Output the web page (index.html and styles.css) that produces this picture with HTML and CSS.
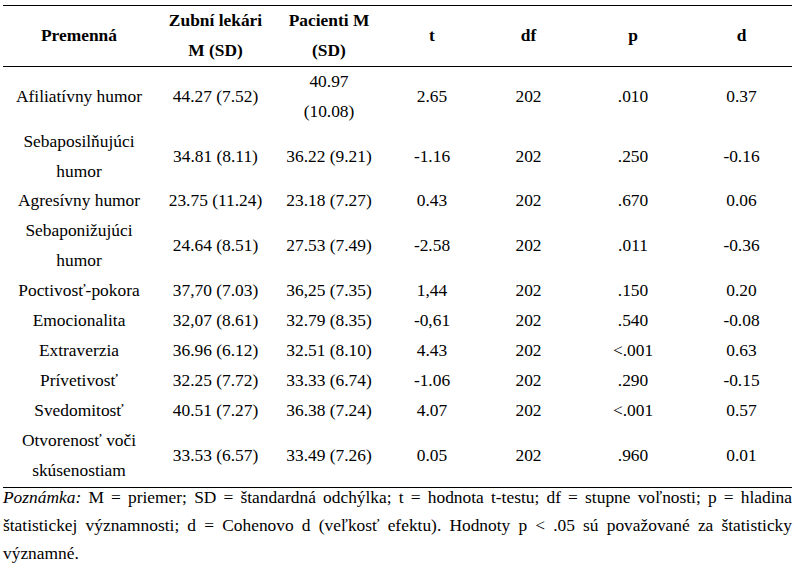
FILE: index.html
```
<!DOCTYPE html>
<html lang="sk">
<head>
<meta charset="utf-8">
<title>Tabuľka</title>
<link rel="stylesheet" href="styles.css">
</head>
<body>
<div class="page">
  <table class="stats">
    <colgroup>
      <col class="c1"><col class="c2"><col class="c3"><col class="c4"><col class="c5"><col class="c6"><col class="c7">
    </colgroup>
    <thead>
      <tr>
        <th>Premenná</th>
        <th>Zubní lekári M (SD)</th>
        <th>Pacienti M (SD)</th>
        <th>t</th>
        <th>df</th>
        <th>p</th>
        <th>d</th>
      </tr>
    </thead>
    <tbody>
      <tr><td>Afiliatívny humor</td><td>44.27 (7.52)</td><td>40.97 (10.08)</td><td>2.65</td><td>202</td><td>.010</td><td>0.37</td></tr>
      <tr><td>Sebaposilňujúci humor</td><td>34.81 (8.11)</td><td>36.22 (9.21)</td><td>-1.16</td><td>202</td><td>.250</td><td>-0.16</td></tr>
      <tr><td>Agresívny humor</td><td>23.75 (11.24)</td><td>23.18 (7.27)</td><td>0.43</td><td>202</td><td>.670</td><td>0.06</td></tr>
      <tr><td>Sebaponižujúci humor</td><td>24.64 (8.51)</td><td>27.53 (7.49)</td><td>-2.58</td><td>202</td><td>.011</td><td>-0.36</td></tr>
      <tr><td>Poctivosť-pokora</td><td>37,70 (7.03)</td><td>36,25 (7.35)</td><td>1,44</td><td>202</td><td>.150</td><td>0.20</td></tr>
      <tr><td>Emocionalita</td><td>32,07 (8.61)</td><td>32.79 (8.35)</td><td>-0,61</td><td>202</td><td>.540</td><td>-0.08</td></tr>
      <tr><td>Extraverzia</td><td>36.96 (6.12)</td><td>32.51 (8.10)</td><td>4.43</td><td>202</td><td>&lt;.001</td><td>0.63</td></tr>
      <tr><td>Prívetivosť</td><td>32.25 (7.72)</td><td>33.33 (6.74)</td><td>-1.06</td><td>202</td><td>.290</td><td>-0.15</td></tr>
      <tr><td>Svedomitosť</td><td>40.51 (7.27)</td><td>36.38 (7.24)</td><td>4.07</td><td>202</td><td>&lt;.001</td><td>0.57</td></tr>
      <tr class="last"><td>Otvorenosť voči skúsenostiam</td><td>33.53 (6.57)</td><td>33.49 (7.26)</td><td>0.05</td><td>202</td><td>.960</td><td>0.01</td></tr>
    </tbody>
  </table>
  <div class="note">
    <p class="note-line justify"><em>Poznámka:</em> M = priemer; SD = štandardná odchýlka; t = hodnota t-testu; df = stupne voľnosti; p = hladina</p>
    <p class="note-line justify">štatistickej významnosti; d = Cohenovo d (veľkosť efektu). Hodnoty p &lt; .05 sú považované za štatisticky</p>
    <p class="note-line">významné.</p>
  </div>
</div>
</body>
</html>
```
FILE: styles.css
```
html, body {
  margin: 0;
  padding: 0;
  background: #ffffff;
}

body {
  font-family: "Liberation Serif", "Times New Roman", serif;
  font-size: 17.4px;
  color: #000000;
}

.page {
  width: 789px;
  padding: 5px 0 0 3px;
}

.stats {
  width: 789px;
  table-layout: fixed;
  border-collapse: separate;
  border-spacing: 0;
}

.c1 { width: 152px; }
.c2 { width: 121px; }
.c3 { width: 106px; }
.c4 { width: 100px; }
.c5 { width: 93px; }
.c6 { width: 116px; }
.c7 { width: 101px; }

.stats th,
.stats td {
  padding: 0 7.8px;
  line-height: 29.9px;
  text-align: center;
  vertical-align: middle;
  font-weight: normal;
}

.stats th {
  font-weight: bold;
  border-top: 1px solid #000000;
  border-bottom: 1px solid #000000;
}

.stats .last td {
  padding-bottom: 1px;
  border-bottom: 1px solid #000000;
}

.note {
  margin-top: -5px;
}

.note-line {
  margin: 0;
  line-height: 28.3px;
  white-space: nowrap;
}

.justify {
  text-align: justify;
  text-align-last: justify;
}

.note em {
  font-style: italic;
}
```
